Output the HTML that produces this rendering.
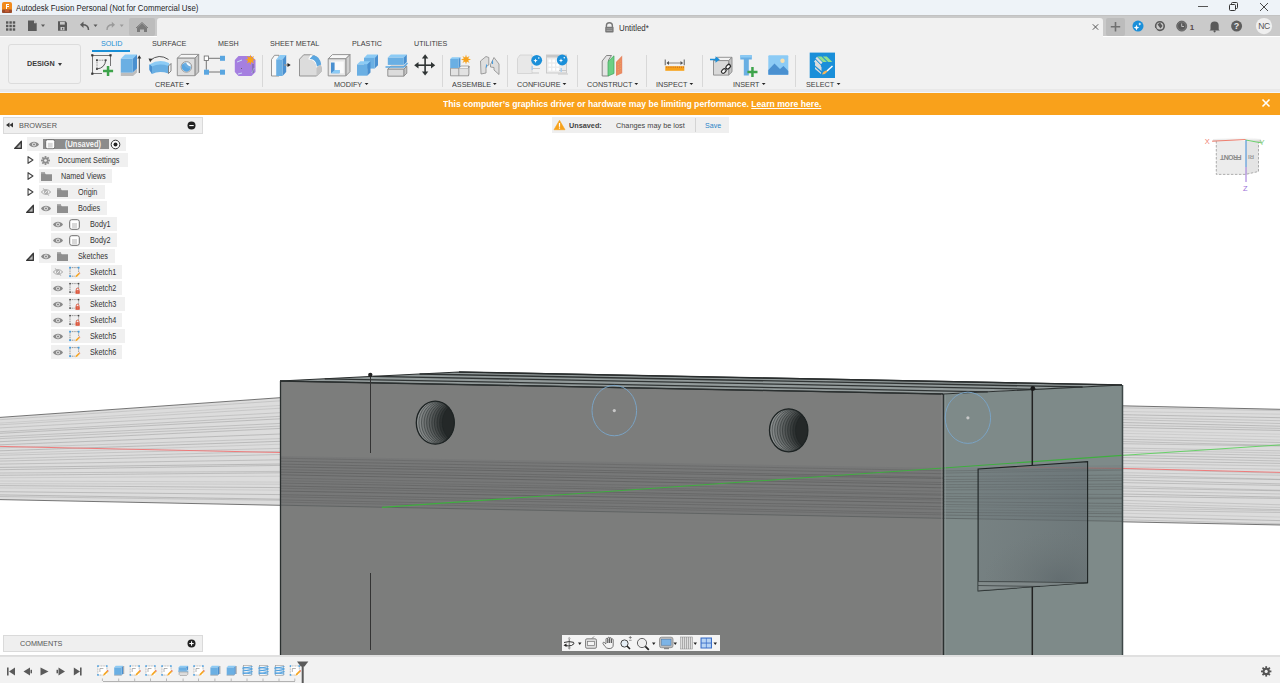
<!DOCTYPE html>
<html><head><meta charset="utf-8">
<style>
*{margin:0;padding:0;box-sizing:border-box}
html,body{width:1280px;height:683px;overflow:hidden;background:#fff;font-family:"Liberation Sans",sans-serif;position:relative}
.a{position:absolute}
.t{position:absolute;white-space:nowrap;line-height:1}
svg{position:absolute;overflow:visible}
#title{left:0;top:0;width:1280px;height:15px;background:#eef3f8}
#tabs{left:0;top:15px;width:1280px;height:21px;background:#cacaca;border-top:1px solid #c2c2c2}
#ribbon{left:0;top:37px;width:1280px;height:56px;background:#f1f1f1;border-bottom:1px solid #f4f7fa}
#rband{left:0;top:89px;width:1280px;height:3px;background:#e8e8e8}
#warn{left:0;top:93px;width:1280px;height:22px;background:#f9a11b}
#bottom{left:0;top:655px;width:1280px;height:28px;background:#f2f2f2;border-top:2px solid #e0e0e0}
.tab{top:40px;font-size:8px;color:#3c3c3c;letter-spacing:-0.2px}
.lbl{color:#3c3c3c}
.lbl:after{content:"";display:inline-block;margin-left:2.3px;border-left:2.3px solid transparent;border-right:2.3px solid transparent;border-top:2.6px solid #222;vertical-align:1.5px}
.sep{top:55px;width:1px;height:32px;background:#d8d8d8}
.row{height:13px;background:#f0f0f0}
.rt{font-size:8.6px;color:#333}
</style></head><body>
<!-- TITLE BAR -->
<div id="title" class="a">
  <svg style="left:2px;top:2px" width="10" height="11" viewBox="0 0 10 11"><rect x="0" y="0" width="10" height="11" rx="2" fill="#f28b1c"/><rect x="0" y="7.5" width="10" height="3.5" rx="1" fill="#9a4a2a"/><rect x="3" y="8.5" width="4" height="1" fill="#e86a3a"/><path d="M4 2h3v1H5v1h2v1H5v2H4z" fill="#fff"/></svg>
  <div class="t" style="left:16px;top:3.61px;font-size:8.4px;color:#1e1e1e;transform:scaleX(0.935);transform-origin:0 0;">Autodesk Fusion Personal (Not for Commercial Use)</div>
  <div class="a" style="left:1198px;top:6px;width:10px;height:1px;background:#555"></div>
  <svg style="left:1229px;top:2px" width="9" height="9" viewBox="0 0 9 9"><rect x="0.5" y="2.5" width="6" height="6" rx="1" fill="none" stroke="#333"/><path d="M2.5 2.5V1.5a1 1 0 0 1 1-1h4a1 1 0 0 1 1 1v4a1 1 0 0 1-1 1h-1" fill="none" stroke="#333"/></svg>
  <svg style="left:1259px;top:2px" width="10" height="10" viewBox="0 0 10 10"><path d="M1 1L9 9M9 1L1 9" stroke="#333" stroke-width="0.9"/></svg>
</div>
<!-- TAB BAR -->
<div id="tabs" class="a"></div>
<div class="a" style="left:129px;top:18px;width:26px;height:18px;background:#bcbcbc;border-radius:2px"></div>
<div class="a" style="left:157px;top:18px;width:946px;height:19px;background:#f1f1f1;border-radius:3px 3px 0 0"></div>
<div class="a" style="left:1106px;top:18px;width:19px;height:18px;background:#bcbcbc;border-radius:2px"></div>
<svg style="left:0;top:15px" width="1280" height="22" viewBox="0 15 1280 22">
 <g fill="#585858"><rect x="6" y="21.3" width="2.4" height="2.4"/><rect x="9.4" y="21.3" width="2.4" height="2.4"/><rect x="12.8" y="21.3" width="2.4" height="2.4"/><rect x="6" y="24.8" width="2.4" height="2.4"/><rect x="9.4" y="24.8" width="2.4" height="2.4"/><rect x="12.8" y="24.8" width="2.4" height="2.4"/><rect x="6" y="28.3" width="2.4" height="2.4"/><rect x="9.4" y="28.3" width="2.4" height="2.4"/><rect x="12.8" y="28.3" width="2.4" height="2.4"/></g>
 <path d="M28 20.6H34L36.7 23.3V31H28Z" fill="#5a5a5a"/><path d="M34 20.6V23.3H36.7" fill="#c8c8c8"/>
 <path d="M41 24.5H45L43 27Z" fill="#5a5a5a"/>
 <path d="M58 21.3H65.5L67 22.8V30.8H58Z" fill="#5a5a5a"/><rect x="60" y="21.8" width="4.8" height="2.8" fill="#c8c8c8"/><rect x="60.5" y="27" width="4" height="3.3" fill="#c8c8c8"/><rect x="62" y="27.8" width="1.2" height="1.8" fill="#5a5a5a"/>
 <path d="M88.5 30Q88.5 24.8 82.5 24.8" fill="none" stroke="#5a5a5a" stroke-width="1.5"/><path d="M80 24.8L83.5 21.6V28Z" fill="#5a5a5a"/>
 <path d="M93.5 24.5H97.5L95.5 27Z" fill="#5a5a5a"/>
 <path d="M107 30Q107 24.8 112.5 24.8" fill="none" stroke="#9a9a9a" stroke-width="1.4"/><path d="M115 24.8L111.8 21.8V27.8Z" fill="#9a9a9a"/>
 <path d="M119.7 24.5H123.7L121.7 27Z" fill="#9a9a9a"/>
 <path d="M137 27.8L142 23.2L147 27.8V32H144V29.5H140V32H137Z" fill="#7a7a7a"/><path d="M136 28L142 22.5L148 28" fill="none" stroke="#7a7a7a" stroke-width="1"/>
 <path d="M606.4 27V25.8a3 3 0 0 1 6 0V27" fill="none" stroke="#777" stroke-width="1.4"/><rect x="605.2" y="26.8" width="8.4" height="5.8" rx="1" fill="#777"/><rect x="606.5" y="28.6" width="5.8" height="0.6" fill="#bbb"/><rect x="606.5" y="30.3" width="5.8" height="0.6" fill="#bbb"/>
 <path d="M1092.8 24.3L1098.2 29.7M1098.2 24.3L1092.8 29.7" stroke="#555" stroke-width="1"/>
 <path d="M1115.5 22V31.5M1110.8 26.8H1120.2" stroke="#707070" stroke-width="1.6"/>
 <circle cx="1138" cy="26.1" r="5.5" fill="#1a8fd9"/><path d="M1136.5 24.8l0.8 2 2 0.8-2 0.8-0.8 2-0.8-2-2-0.8 2-0.8z" fill="#fff"/><path d="M1139.8 22.5l0.5 1.1 1.1 0.5-1.1 0.5-0.5 1.1-0.5-1.1-1.1-0.5 1.1-0.5z" fill="#fff"/>
 <circle cx="1159.9" cy="26.1" r="4.3" fill="none" stroke="#5a5a5a" stroke-width="1.6"/><path d="M1157.5 24.5L1160 22.5L1162.5 26L1160.5 28.5Z" fill="#5a5a5a"/><path d="M1155.3 28L1157.5 31.5" stroke="#c8c8c8" stroke-width="1"/>
 <circle cx="1181.7" cy="26.1" r="5" fill="#777" stroke="#5a5a5a" stroke-width="0.8"/><circle cx="1181.7" cy="26.1" r="3.6" fill="#5a5a5a"/><path d="M1181.7 23.5V26.5H1184" fill="none" stroke="#c8c8c8" stroke-width="0.9"/>
 <text x="1189.8" y="29.5" font-family="Liberation Sans" font-size="8" font-weight="bold" fill="#5a4a4a">1</text>
 <path d="M1210.5 29.5V25.5a4.1 4.1 0 0 1 8.2 0V29.5L1219.8 30.5H1209.4Z" fill="#5a5a5a"/><circle cx="1214.6" cy="31.3" r="1.1" fill="#5a5a5a"/>
 <circle cx="1236.6" cy="26.1" r="5.5" fill="#5e5e5e"/>
 <text x="1236.6" y="29.4" text-anchor="middle" font-family="Liberation Sans" font-size="9" font-weight="bold" fill="#e8e8e8">?</text>
 <circle cx="1264" cy="26.1" r="8.1" fill="#efefef"/>
 <text x="1264" y="29.3" text-anchor="middle" font-family="Liberation Sans" font-size="8.5" fill="#555" letter-spacing="-0.3">NC</text>
</svg>
<div class="t" style="left:618.5px;top:24.2px;font-size:9px;color:#333;transform:scaleX(0.873);transform-origin:0 0;">Untitled*</div>
<!-- RIBBON -->
<div id="ribbon" class="a">
  <div class="a" style="left:8px;top:7px;width:73px;height:40px;border:1px solid #dcdcdc;border-radius:3px"></div>
  <div class="t" style="left:27px;top:23px;font-size:8px;font-weight:bold;color:#3c3c3c;transform:scaleX(0.903);transform-origin:0 0;">DESIGN</div>
  <div class="a" style="left:58px;top:26px;border-left:2.5px solid transparent;border-right:2.5px solid transparent;border-top:3px solid #3c3c3c"></div>
</div>
<div id="rband" class="a"></div>
<div class="t" style="left:100.5px;top:40.18px;font-size:7.8px;color:#1a8fd6;transform:scaleX(0.919);transform-origin:0 0;">SOLID</div>
<div class="a" style="left:92px;top:50px;width:38px;height:2px;background:#1a8fd6"></div>
<div class="t" style="left:152px;top:40.18px;font-size:7.8px;color:#3c3c3c;transform:scaleX(0.934);transform-origin:0 0;">SURFACE</div>
<div class="t" style="left:217.5px;top:40.18px;font-size:7.8px;color:#3c3c3c;transform:scaleX(0.914);transform-origin:0 0;">MESH</div>
<div class="t" style="left:270px;top:40.18px;font-size:7.8px;color:#3c3c3c;transform:scaleX(0.921);transform-origin:0 0;">SHEET METAL</div>
<div class="t" style="left:351.7px;top:40.18px;font-size:7.8px;color:#3c3c3c;transform:scaleX(0.923);transform-origin:0 0;">PLASTIC</div>
<div class="t" style="left:414px;top:40.18px;font-size:7.8px;color:#3c3c3c;transform:scaleX(0.915);transform-origin:0 0;">UTILITIES</div>
<div class="t lbl" style="left:155.1px;top:80.8px;font-size:7.8px;transform:scaleX(0.93);transform-origin:0 0">CREATE</div>
<div class="t lbl" style="left:334px;top:80.8px;font-size:7.8px;transform:scaleX(0.93);transform-origin:0 0">MODIFY</div>
<div class="t lbl" style="left:452px;top:80.8px;font-size:7.8px;transform:scaleX(0.93);transform-origin:0 0">ASSEMBLE</div>
<div class="t lbl" style="left:517px;top:80.8px;font-size:7.8px;transform:scaleX(0.93);transform-origin:0 0">CONFIGURE</div>
<div class="t lbl" style="left:587px;top:80.8px;font-size:7.8px;transform:scaleX(0.93);transform-origin:0 0">CONSTRUCT</div>
<div class="t lbl" style="left:656px;top:80.8px;font-size:7.8px;transform:scaleX(0.93);transform-origin:0 0">INSPECT</div>
<div class="t lbl" style="left:732.5px;top:80.8px;font-size:7.8px;transform:scaleX(0.93);transform-origin:0 0">INSERT</div>
<div class="t lbl" style="left:805.5px;top:80.8px;font-size:7.8px;transform:scaleX(0.93);transform-origin:0 0">SELECT</div>
<div class="a sep" style="left:262px"></div>
<div class="a sep" style="left:442px"></div>
<div class="a sep" style="left:507px"></div>
<div class="a sep" style="left:577px"></div>
<div class="a sep" style="left:646px"></div>
<div class="a sep" style="left:702px"></div>
<div class="a sep" style="left:795px"></div>
<svg style="left:0;top:0" width="1280" height="100" viewBox="0 0 1280 100"><g stroke="#555" stroke-width="0.8" fill="none"><path d="M92.5 55.5H110.5V66M92.5 55.5V73.5H102"/></g>
<rect x="91.2" y="54.199999999999996" width="2.2" height="2.2" fill="#333"/>
<rect x="109.4" y="54.199999999999996" width="2.2" height="2.2" fill="#333"/>
<rect x="91.2" y="72.60000000000001" width="2.2" height="2.2" fill="#333"/>
<path d="M97 60.2H105.5M97 60.2V69" stroke="#666" stroke-width="0.8" stroke-dasharray="1 0.7" fill="none"/>
<path d="M105.7 60.2Q105 68 97 69" stroke="#444" stroke-width="0.9" fill="none"/>
<rect x="96.0" y="59.300000000000004" width="1.8" height="1.8" fill="#444"/>
<rect x="104.8" y="59.300000000000004" width="1.8" height="1.8" fill="#444"/>
<rect x="96.0" y="68.1" width="1.8" height="1.8" fill="#444"/>
<path d="M106.8 66h2.5v3.8h3.8v2.5h-3.8v3.8h-2.5v-3.8h-3.8v-2.5h3.8z" fill="#3da34a"/>
<path d="M120.8 72.5H133L137 68.5V72.5L133 76H120.8Z" fill="#bdbdbd"/>
<path d="M120.8 58.800000000000004L125.0 54.6H137.0L132.8 58.800000000000004Z" fill="#8ccbf5"/>
<path d="M132.8 58.800000000000004L137.0 54.6V68.39999999999999L132.8 72.6Z" fill="#4a90d0"/>
<rect x="120.8" y="58.800000000000004" width="12.0" height="13.8" fill="#6aafe3"/>
<path d="M139.3 73V57" stroke="#444" stroke-width="1"/><path d="M137.3 58.5L139.3 55.3L141.3 58.5Z" fill="#333"/>
<path d="M150 60.5Q159 53 168.5 59.5" stroke="#444" stroke-width="0.9" fill="none"/><path d="M148.5 58.5L152.5 58.8L150.2 62.2Z" fill="#333"/>
<path d="M149.5 64.5Q159 58.5 169 63L170 69Q159 66 152 70.5L149.5 69Z" fill="#8ccbf5"/>
<path d="M149.5 64.5L152 66.5Q159 63 168.5 66V73.5Q159 70.5 152 74L149.5 70Z" fill="#6aafe3"/>
<path d="M149.5 64.5L152 66.5V74L149.5 70Z" fill="#4a90d0"/>
<path d="M168.5 66L171 63.5V71L168.5 73.5Z" fill="#f4f4f4" stroke="#555" stroke-width="0.7"/>
<path d="M177.3 58.199999999999996L181.10000000000002 54.4H198.70000000000002L194.9 58.199999999999996Z" fill="#f6f6f6" stroke="#8a8a8a" stroke-width="0.9" stroke-linejoin="round"/>
<path d="M194.9 58.199999999999996L198.70000000000002 54.4V71.9L194.9 75.7Z" fill="#c6c6c6" stroke="#8a8a8a" stroke-width="0.9" stroke-linejoin="round"/>
<rect x="177.3" y="58.199999999999996" width="17.599999999999998" height="17.5" fill="#dedede" stroke="#8a8a8a" stroke-width="0.9" stroke-linejoin="round"/>
<circle cx="186.4" cy="66.9" r="5.3" fill="#eaeaea" stroke="#8a8a8a" stroke-width="0.8"/>
<path d="M182.2 64.5A4.6 4.6 0 0 0 190.6 68.8Q185.5 68.5 183.5 63.8Z" fill="#5aa6e0"/><circle cx="186.4" cy="66.9" r="4.5" fill="#5aa6e0" opacity="0.85"/><path d="M186 62.5Q190 62.8 190.8 66.5Q187.5 66 186 62.5Z" fill="#fff"/>
<path d="M208.5 58.3H220M206.3 60.5V69.8M208.5 72H220" stroke="#555" stroke-width="0.8"/>
<rect x="204.2" y="56" width="4.4" height="4.4" fill="#fff" stroke="#666" stroke-width="0.8"/>
<rect x="220" y="55.8" width="5" height="5" fill="#5aa6e0"/>
<rect x="204" y="69.7" width="5" height="5" fill="#5aa6e0"/>
<rect x="220" y="69.7" width="5" height="5" fill="#5aa6e0"/>
<path d="M238.5 56H251.5L255.5 60V72L251.5 76H238.5L234.8 72V60Z" fill="#a57fe0"/>
<path d="M237 62L242 60M252 73L254 68M238 74L242 73" stroke="#cfe6f7" stroke-width="0.9"/>
<path d="M253 64V73" stroke="#5a5a7a" stroke-width="0.8"/><circle cx="241.5" cy="68.5" r="0.5" fill="#555"/>
<polygon points="255.60,59.80 252.62,60.72 254.08,63.48 251.32,62.02 250.40,65.00 249.48,62.02 246.72,63.48 248.18,60.72 245.20,59.80 248.18,58.88 246.72,56.12 249.48,57.58 250.40,54.60 251.32,57.58 254.08,56.12 252.62,58.88" fill="#f7a21b"/>
<path d="M271.5 76V59.5L274.5 55.3H279V76Z" fill="#f8f8f8" stroke="#8a8a8a" stroke-width="0.9" stroke-linejoin="round"/>
<path d="M276.2 59.5L280 55H286.2L282.5 59.5Z" fill="#8ccbf5"/><path d="M282.5 59.5L286.2 55V72L282.5 76Z" fill="#4a90d0"/><rect x="276.2" y="59.5" width="6.3" height="16.5" fill="#6aafe3"/>
<path d="M284 65H288" stroke="#999" stroke-width="1.4"/><path d="M287.5 63L290.7 65L287.5 67Z" fill="#222"/>
<path d="M299.5 59.2L303.7 54.8H310Q319.5 55 321 67.5V71.5L316.5 76H299.5Z" fill="#dcdcdc" stroke="#8a8a8a" stroke-width="0.9" stroke-linejoin="round"/>
<path d="M316.5 76V68L321 64V71.5Z" fill="#c4c4c4"/>
<path d="M308.2 59.2Q316.5 60 316.5 68Q316.5 66 321 64.5Q319 55.5 310.5 55Z" fill="#fff"/>
<path d="M309.5 59Q316 58.5 317 66.5L321.2 64.5Q319.5 55.5 313 55.3Z" fill="#5aa6e0"/>
<path d="M328.2 58.800000000000004L332.4 54.6H350.0L345.8 58.800000000000004Z" fill="#f8f8f8" stroke="#8a8a8a" stroke-width="0.9" stroke-linejoin="round"/>
<path d="M345.8 58.800000000000004L350.0 54.6V71.7L345.8 75.9Z" fill="#cfcfcf" stroke="#8a8a8a" stroke-width="0.9" stroke-linejoin="round"/>
<rect x="328.2" y="58.800000000000004" width="17.6" height="17.1" fill="#e6e6e6" stroke="#8a8a8a" stroke-width="0.9" stroke-linejoin="round"/>
<rect x="330.8" y="61.5" width="13" height="11.8" fill="#fafafa"/>
<path d="M331 62.6H334.6V70H339.5V73.3H331Z" fill="#4a90d0"/><path d="M334.6 70H339.5V73.3H331Z" fill="#8ccbf5"/>
<path d="M364 57.9L367.3 54.6H378L374.7 57.9Z" fill="#8ccbf5"/>
<path d="M374.7 57.9L378 54.6V65.3L374.7 68.6Z" fill="#4a90d0"/>
<rect x="364" y="57.9" width="10.7" height="10.7" fill="#6aafe3"/>
<path d="M357 64.5L360.3 61.2H370.5L367.2 64.5Z" fill="#8ccbf5"/>
<path d="M367.2 64.5L370.5 61.2V72.4L367.2 75.7Z" fill="#4a90d0"/>
<rect x="357" y="64.5" width="10.2" height="11.2" fill="#6aafe3"/>
<path d="M387.8 69.2L390.8 66.2H406.8L403.8 69.2Z" fill="#f2f2f2" stroke="#8a8a8a" stroke-width="0.9" stroke-linejoin="round"/>
<path d="M403.8 69.2L406.8 66.2V73.2L403.8 76.2Z" fill="#c2c2c2" stroke="#8a8a8a" stroke-width="0.9" stroke-linejoin="round"/>
<rect x="387.8" y="69.2" width="16" height="7" fill="#dcdcdc" stroke="#8a8a8a" stroke-width="0.9" stroke-linejoin="round"/>
<path d="M387.8 57.6L390.8 54.6H406.8L403.8 57.6Z" fill="#8ccbf5"/>
<path d="M403.8 57.6L406.8 54.6V61.900000000000006L403.8 64.9Z" fill="#4a90d0"/>
<rect x="387.8" y="57.6" width="16" height="7.300000000000001" fill="#6aafe3"/>
<path d="M385.5 67H403.8L407.5 63" stroke="#5aa6e0" stroke-width="1.3" fill="none"/>
<g fill="#2f3434"><rect x="424.3" y="57" width="1.6" height="16"/><rect x="416.5" y="64.4" width="16" height="1.6"/><path d="M425.1 54.2L428.3 58.5H421.9Z"/><path d="M425.1 75.6L428.3 71.5H421.9Z"/><path d="M414.2 65.2L418.5 62V68.4Z"/><path d="M435.2 65.2L431 62V68.4Z"/></g>
<path d="M450.5 68.2H468.5V75.8H450.5Z" fill="#e2e2e2" stroke="#8a8a8a" stroke-width="0.8"/><path d="M458.8 68.2V75.8" stroke="#8a8a8a" stroke-width="0.8"/><path d="M459 68.2L461 66H469L468.5 68.2M468.5 68.2L469 66V73.8L468.5 75.8" fill="#f4f4f4" stroke="#8a8a8a" stroke-width="0.7"/>
<path d="M450.2 59.0L452.0 57.2H460.4L458.59999999999997 59.0Z" fill="#8ccbf5"/>
<path d="M458.59999999999997 59.0L460.4 57.2V66.2L458.59999999999997 68.0Z" fill="#4a90d0"/>
<rect x="450.2" y="59.0" width="8.399999999999999" height="9.0" fill="#6aafe3"/>
<polygon points="471.00,59.50 468.12,60.38 469.54,63.04 466.88,61.62 466.00,64.50 465.12,61.62 462.46,63.04 463.88,60.38 461.00,59.50 463.88,58.62 462.46,55.96 465.12,57.38 466.00,54.50 466.88,57.38 469.54,55.96 468.12,58.62" fill="#f7a21b"/>
<path d="M480.5 61L486 56.5L488.8 57.5V65L486 66.5V73L481 74Z" fill="#dedede" stroke="#8a8a8a" stroke-width="0.8" stroke-linejoin="round"/>
<path d="M490.5 64.5L494 57.5L499 64V74.5L494 70V67.5L490.5 67Z" fill="#dedede" stroke="#8a8a8a" stroke-width="0.8" stroke-linejoin="round"/>
<path d="M492.5 60.5V64M486.5 64.5V67.5" stroke="#4a9ee0" stroke-width="1.1"/>
<path d="M517.5 58.5L520 55H532V73.5H517.5Z" fill="#e8e8e8" stroke="#d0d0d0" stroke-width="0.8"/>
<path d="M532 68.5H540M532 73H539" stroke="#c8c8c8" stroke-width="1.1"/><rect x="531.5" y="66" width="1.4" height="4" fill="#a8cdee"/>
<circle cx="536.7" cy="60.3" r="5.4" fill="#1a8fd9"/><path d="M535.5 58.5l0.6 1.6 1.6 0.6-1.6 0.6-0.6 1.6-0.6-1.6-1.6-0.6 1.6-0.6z" fill="#fff"/><circle cx="538.8" cy="58" r="0.8" fill="#fff"/>
<rect x="546.5" y="55" width="20" height="18" fill="#ececec" stroke="#c8c8c8" stroke-width="0.9"/><rect x="546.5" y="55" width="20" height="2.5" fill="#c8c8c8"/>
<rect x="548.5" y="59.5" width="2.6" height="2.8" fill="#fff"/>
<rect x="552.4" y="59.5" width="2.6" height="2.8" fill="#fff"/>
<rect x="556.3" y="59.5" width="2.6" height="2.8" fill="#fff"/>
<rect x="548.5" y="63.7" width="2.6" height="2.8" fill="#fff"/>
<rect x="552.4" y="63.7" width="2.6" height="2.8" fill="#fff"/>
<rect x="556.3" y="63.7" width="2.6" height="2.8" fill="#fff"/>
<rect x="548.5" y="67.9" width="2.6" height="2.8" fill="#fff"/>
<rect x="552.4" y="67.9" width="2.6" height="2.8" fill="#fff"/>
<rect x="556.3" y="67.9" width="2.6" height="2.8" fill="#fff"/>
<path d="M558 74H568M559 70.5H567" stroke="#c8c8c8" stroke-width="1.1"/><rect x="560.5" y="68" width="1.4" height="4" fill="#a8cdee"/>
<circle cx="562.2" cy="60" r="5.4" fill="#1a8fd9"/><path d="M561 58.3l0.6 1.6 1.6 0.6-1.6 0.6-0.6 1.6-0.6-1.6-1.6-0.6 1.6-0.6z" fill="#fff"/><circle cx="564.3" cy="57.8" r="0.8" fill="#fff"/>
<path d="M602.2 61L606.5 55.5H611.5L608.5 60V76H602.2Z" fill="#e4e4e4" stroke="#7a7a7a" stroke-width="0.9" stroke-linejoin="round"/>
<path d="M608 61.5L614 55.8V73.5L608 76Z" fill="#6bcf84" stroke="#3fa35a" stroke-width="0.7"/>
<path d="M616 62L622.2 55.5V73.3L616 76Z" fill="#e88862"/>
<circle cx="618.2" cy="62.0" r="0.45" fill="#f7c24a"/><circle cx="620.2" cy="61.0" r="0.45" fill="#f7c24a"/>
<circle cx="618.2" cy="64.5" r="0.45" fill="#f7c24a"/><circle cx="620.2" cy="63.5" r="0.45" fill="#f7c24a"/>
<circle cx="618.2" cy="67.0" r="0.45" fill="#f7c24a"/><circle cx="620.2" cy="66.0" r="0.45" fill="#f7c24a"/>
<circle cx="618.2" cy="69.5" r="0.45" fill="#f7c24a"/><circle cx="620.2" cy="68.5" r="0.45" fill="#f7c24a"/>
<circle cx="618.2" cy="72.0" r="0.45" fill="#f7c24a"/><circle cx="620.2" cy="71.0" r="0.45" fill="#f7c24a"/>
<rect x="665.3" y="66.2" width="19" height="4.6" fill="#f7a21b"/>
<path d="M665.3 59.5V65.3M684.3 59.5V65.3" stroke="#888" stroke-width="1.4"/><path d="M667 63H682.5" stroke="#999" stroke-width="1.2"/><path d="M666.5 63L669 61V65ZM683 63L680.5 61V65Z" fill="#555"/>
<rect x="666.5" y="66.5" width="0.6" height="1.4" fill="#b85a2a"/>
<rect x="668.6" y="66.5" width="0.6" height="1.4" fill="#b85a2a"/>
<rect x="670.7" y="66.5" width="0.6" height="1.4" fill="#b85a2a"/>
<rect x="672.8" y="66.5" width="0.6" height="1.4" fill="#b85a2a"/>
<rect x="674.9" y="66.5" width="0.6" height="1.4" fill="#b85a2a"/>
<rect x="677.0" y="66.5" width="0.6" height="1.4" fill="#b85a2a"/>
<rect x="679.1" y="66.5" width="0.6" height="1.4" fill="#b85a2a"/>
<rect x="681.2" y="66.5" width="0.6" height="1.4" fill="#b85a2a"/>
<rect x="683.3" y="66.5" width="0.6" height="1.4" fill="#b85a2a"/>
<path d="M713.5 60.599999999999994L716.8 57.3H732.0L728.7 60.599999999999994Z" fill="#f2f2f2" stroke="#8a8a8a" stroke-width="0.9" stroke-linejoin="round"/>
<path d="M728.7 60.599999999999994L732.0 57.3V71.8L728.7 75.1Z" fill="#c4c4c4" stroke="#8a8a8a" stroke-width="0.9" stroke-linejoin="round"/>
<rect x="713.5" y="60.599999999999994" width="15.2" height="14.5" fill="#d9d9d9" stroke="#8a8a8a" stroke-width="0.9" stroke-linejoin="round"/>
<path d="M710 58.8H715.5V56.2L719.8 59.5L715.5 62.7V60.3H710Z" fill="#1a8fd9"/>
<g fill="none" stroke="#fff" stroke-width="3"><path d="M722 73.5L724.5 71M727 68.5L729.5 66"/></g>
<g fill="none" stroke="#2a2a2a" stroke-width="1.2"><rect x="721.2" y="69.3" width="5.2" height="3.4" rx="1.7" transform="rotate(-45 723.8 71)"/><rect x="725.6" y="65" width="5.2" height="3.4" rx="1.7" transform="rotate(-45 728.2 66.7)"/></g>
<path d="M740.3 55.2H751.8V59.5H748.8V75.5H743.8V59.5H740.3Z" fill="#6aafe3"/><path d="M740.3 55.2H751.8V57.5H740.3Z" fill="#8ccbf5"/>
<path d="M751.2 67h2.5v3.8h3.8v2.5h-3.8v3.8h-2.5v-3.8h-3.8v-2.5h3.8z" fill="#3da34a"/>
<rect x="768.3" y="55.3" width="20" height="19.5" rx="1" fill="#8ccbf5"/><path d="M768.3 70L774.5 63.5L780 69L783.5 66L788.3 71V74.8H768.3Z" fill="#4a90d0"/><circle cx="782.5" cy="60.8" r="2.2" fill="#f8e0b0"/>
<rect x="809.7" y="52.6" width="25.3" height="25.4" fill="#1a8fd9"/>
<path d="M815.5 58.5L817 56.8L822.5 62.5L821 64.2Z M814 61.5L815.5 59.8L821 65.5L819.5 67.2Z" fill="#e0e0e0"/>
<path d="M815 63.5L816.5 61.8L821.5 67V71L815 65.5Z M815 67L821 72.5V74L815 69Z" fill="#dcdcdc"/>
<path d="M817.3 56.5H821.5L827 62H823Z M822.7 56.5H826.8L832.3 62H828.2Z" fill="#8fe08f"/>
<path d="M826.5 70.5L832 65.5L833 66.5L827.5 71.5Z" fill="#fff"/><path d="M822 74.5Q823 71 826.5 70.5L827.5 71.5Q826 74 822 74.5Z" fill="#f5b75a"/></svg>
<!-- WARNING -->
<div id="warn" class="a">
  <div class="t" style="left:442.5px;top:6.8px;font-size:9px;font-weight:bold;color:#fff;transform:scaleX(0.96);transform-origin:0 0;">This computer’s graphics driver or hardware may be limiting performance. <span style="text-decoration:underline">Learn more here.</span></div>
  <svg style="left:1262px;top:6px" width="8" height="8" viewBox="0 0 8 8"><path d="M0.5 0.5L7.5 7.5M7.5 0.5L0.5 7.5" stroke="#fff" stroke-width="1.6"/></svg>
</div>
<!-- VIEWPORT -->
<svg id="scene" style="left:0;top:0" width="1280" height="683" viewBox="0 0 1280 683">
<polygon points="0,417.4 280.5,397.7 280.5,505.3 0,499.6" fill="#dcdcdc"/>
<line x1="0" y1="419.7" x2="280.5" y2="400.8" stroke="#808080" stroke-width="0.6" stroke-opacity="0.42"/>
<line x1="0" y1="423.1" x2="280.5" y2="405.4" stroke="#808080" stroke-width="0.6" stroke-opacity="0.30"/>
<line x1="0" y1="424.8" x2="280.5" y2="408.2" stroke="#808080" stroke-width="0.6" stroke-opacity="0.37"/>
<line x1="0" y1="427.9" x2="280.5" y2="412.7" stroke="#808080" stroke-width="0.6" stroke-opacity="0.46"/>
<line x1="0" y1="431.7" x2="280.5" y2="416.3" stroke="#808080" stroke-width="0.6" stroke-opacity="0.52"/>
<line x1="0" y1="433.3" x2="280.5" y2="418.8" stroke="#808080" stroke-width="0.6" stroke-opacity="0.61"/>
<line x1="0" y1="436.6" x2="280.5" y2="423.4" stroke="#808080" stroke-width="0.6" stroke-opacity="0.53"/>
<line x1="0" y1="438.6" x2="280.5" y2="426.1" stroke="#808080" stroke-width="0.6" stroke-opacity="0.50"/>
<line x1="0" y1="441.7" x2="280.5" y2="428.4" stroke="#808080" stroke-width="0.6" stroke-opacity="0.61"/>
<line x1="0" y1="444.8" x2="280.5" y2="434.0" stroke="#808080" stroke-width="0.6" stroke-opacity="0.61"/>
<line x1="0" y1="447.9" x2="280.5" y2="438.6" stroke="#808080" stroke-width="0.6" stroke-opacity="0.43"/>
<line x1="0" y1="450.8" x2="280.5" y2="441.3" stroke="#808080" stroke-width="0.6" stroke-opacity="0.64"/>
<line x1="0" y1="453.6" x2="280.5" y2="444.2" stroke="#808080" stroke-width="0.6" stroke-opacity="0.33"/>
<line x1="0" y1="455.3" x2="280.5" y2="448.4" stroke="#808080" stroke-width="0.6" stroke-opacity="0.44"/>
<line x1="0" y1="458.7" x2="280.5" y2="451.3" stroke="#808080" stroke-width="0.6" stroke-opacity="0.47"/>
<line x1="0" y1="461.1" x2="280.5" y2="454.5" stroke="#808080" stroke-width="0.6" stroke-opacity="0.50"/>
<line x1="0" y1="464.1" x2="280.5" y2="459.8" stroke="#808080" stroke-width="0.6" stroke-opacity="0.54"/>
<line x1="0" y1="467.4" x2="280.5" y2="464.0" stroke="#808080" stroke-width="0.6" stroke-opacity="0.66"/>
<line x1="0" y1="469.7" x2="280.5" y2="465.4" stroke="#808080" stroke-width="0.6" stroke-opacity="0.61"/>
<line x1="0" y1="473.0" x2="280.5" y2="471.4" stroke="#808080" stroke-width="0.6" stroke-opacity="0.49"/>
<line x1="0" y1="475.3" x2="280.5" y2="472.8" stroke="#808080" stroke-width="0.6" stroke-opacity="0.60"/>
<line x1="0" y1="477.8" x2="280.5" y2="476.2" stroke="#808080" stroke-width="0.6" stroke-opacity="0.30"/>
<line x1="0" y1="481.0" x2="280.5" y2="482.1" stroke="#808080" stroke-width="0.6" stroke-opacity="0.31"/>
<line x1="0" y1="483.7" x2="280.5" y2="484.2" stroke="#808080" stroke-width="0.6" stroke-opacity="0.33"/>
<line x1="0" y1="485.6" x2="280.5" y2="487.6" stroke="#808080" stroke-width="0.6" stroke-opacity="0.61"/>
<line x1="0" y1="487.9" x2="280.5" y2="490.2" stroke="#808080" stroke-width="0.6" stroke-opacity="0.29"/>
<line x1="0" y1="491.7" x2="280.5" y2="494.6" stroke="#808080" stroke-width="0.6" stroke-opacity="0.61"/>
<line x1="0" y1="494.9" x2="280.5" y2="499.2" stroke="#808080" stroke-width="0.6" stroke-opacity="0.66"/>
<line x1="0" y1="496.5" x2="280.5" y2="500.3" stroke="#808080" stroke-width="0.6" stroke-opacity="0.51"/>
<line x1="0" y1="417.4" x2="280" y2="397.7" stroke="#555" stroke-width="1" stroke-opacity="0.8"/>
<line x1="0" y1="499.6" x2="280" y2="505.3" stroke="#555" stroke-width="1" stroke-opacity="0.8"/>
<line x1="0" y1="446.4" x2="280" y2="452.5" stroke="#f07070" stroke-width="0.9"/>
<polygon points="1122,405.8 1280,409.3 1280,525 1122,521.8" fill="#dcdcdc"/>
<line x1="1122" y1="407.8" x2="1280" y2="410.6" stroke="#808080" stroke-width="0.6" stroke-opacity="0.43"/>
<line x1="1122" y1="411.5" x2="1280" y2="414.2" stroke="#808080" stroke-width="0.6" stroke-opacity="0.29"/>
<line x1="1122" y1="414.7" x2="1280" y2="417.7" stroke="#808080" stroke-width="0.6" stroke-opacity="0.64"/>
<line x1="1122" y1="417.5" x2="1280" y2="420.7" stroke="#808080" stroke-width="0.6" stroke-opacity="0.45"/>
<line x1="1122" y1="419.6" x2="1280" y2="423.5" stroke="#808080" stroke-width="0.6" stroke-opacity="0.50"/>
<line x1="1122" y1="422.5" x2="1280" y2="426.2" stroke="#808080" stroke-width="0.6" stroke-opacity="0.64"/>
<line x1="1122" y1="425.1" x2="1280" y2="428.4" stroke="#808080" stroke-width="0.6" stroke-opacity="0.55"/>
<line x1="1122" y1="427.5" x2="1280" y2="430.4" stroke="#808080" stroke-width="0.6" stroke-opacity="0.65"/>
<line x1="1122" y1="430.7" x2="1280" y2="434.2" stroke="#808080" stroke-width="0.6" stroke-opacity="0.28"/>
<line x1="1122" y1="433.3" x2="1280" y2="436.9" stroke="#808080" stroke-width="0.6" stroke-opacity="0.28"/>
<line x1="1122" y1="436.4" x2="1280" y2="440.1" stroke="#808080" stroke-width="0.6" stroke-opacity="0.30"/>
<line x1="1122" y1="439.2" x2="1280" y2="442.5" stroke="#808080" stroke-width="0.6" stroke-opacity="0.54"/>
<line x1="1122" y1="441.5" x2="1280" y2="445.4" stroke="#808080" stroke-width="0.6" stroke-opacity="0.56"/>
<line x1="1122" y1="443.7" x2="1280" y2="446.0" stroke="#808080" stroke-width="0.6" stroke-opacity="0.54"/>
<line x1="1122" y1="448.0" x2="1280" y2="450.8" stroke="#808080" stroke-width="0.6" stroke-opacity="0.45"/>
<line x1="1122" y1="450.1" x2="1280" y2="453.1" stroke="#808080" stroke-width="0.6" stroke-opacity="0.42"/>
<line x1="1122" y1="452.4" x2="1280" y2="455.5" stroke="#808080" stroke-width="0.6" stroke-opacity="0.50"/>
<line x1="1122" y1="455.2" x2="1280" y2="458.3" stroke="#808080" stroke-width="0.6" stroke-opacity="0.57"/>
<line x1="1122" y1="457.5" x2="1280" y2="461.0" stroke="#808080" stroke-width="0.6" stroke-opacity="0.56"/>
<line x1="1122" y1="460.7" x2="1280" y2="463.4" stroke="#808080" stroke-width="0.6" stroke-opacity="0.58"/>
<line x1="1122" y1="463.4" x2="1280" y2="466.0" stroke="#808080" stroke-width="0.6" stroke-opacity="0.44"/>
<line x1="1122" y1="466.9" x2="1280" y2="469.3" stroke="#808080" stroke-width="0.6" stroke-opacity="0.40"/>
<line x1="1122" y1="469.0" x2="1280" y2="473.2" stroke="#808080" stroke-width="0.6" stroke-opacity="0.44"/>
<line x1="1122" y1="472.7" x2="1280" y2="475.2" stroke="#808080" stroke-width="0.6" stroke-opacity="0.40"/>
<line x1="1122" y1="475.1" x2="1280" y2="479.3" stroke="#808080" stroke-width="0.6" stroke-opacity="0.45"/>
<line x1="1122" y1="477.2" x2="1280" y2="479.6" stroke="#808080" stroke-width="0.6" stroke-opacity="0.48"/>
<line x1="1122" y1="479.9" x2="1280" y2="483.9" stroke="#808080" stroke-width="0.6" stroke-opacity="0.60"/>
<line x1="1122" y1="482.6" x2="1280" y2="485.4" stroke="#808080" stroke-width="0.6" stroke-opacity="0.59"/>
<line x1="1122" y1="486.1" x2="1280" y2="490.2" stroke="#808080" stroke-width="0.6" stroke-opacity="0.41"/>
<line x1="1122" y1="488.0" x2="1280" y2="490.8" stroke="#808080" stroke-width="0.6" stroke-opacity="0.58"/>
<line x1="1122" y1="491.0" x2="1280" y2="494.0" stroke="#808080" stroke-width="0.6" stroke-opacity="0.44"/>
<line x1="1122" y1="494.0" x2="1280" y2="497.1" stroke="#808080" stroke-width="0.6" stroke-opacity="0.63"/>
<line x1="1122" y1="496.4" x2="1280" y2="498.4" stroke="#808080" stroke-width="0.6" stroke-opacity="0.64"/>
<line x1="1122" y1="500.3" x2="1280" y2="504.8" stroke="#808080" stroke-width="0.6" stroke-opacity="0.44"/>
<line x1="1122" y1="503.2" x2="1280" y2="507.5" stroke="#808080" stroke-width="0.6" stroke-opacity="0.36"/>
<line x1="1122" y1="505.6" x2="1280" y2="509.7" stroke="#808080" stroke-width="0.6" stroke-opacity="0.53"/>
<line x1="1122" y1="508.0" x2="1280" y2="510.8" stroke="#808080" stroke-width="0.6" stroke-opacity="0.41"/>
<line x1="1122" y1="510.3" x2="1280" y2="512.5" stroke="#808080" stroke-width="0.6" stroke-opacity="0.50"/>
<line x1="1122" y1="513.2" x2="1280" y2="517.1" stroke="#808080" stroke-width="0.6" stroke-opacity="0.29"/>
<line x1="1122" y1="516.9" x2="1280" y2="520.6" stroke="#808080" stroke-width="0.6" stroke-opacity="0.63"/>
<line x1="1122" y1="519.7" x2="1280" y2="523.9" stroke="#808080" stroke-width="0.6" stroke-opacity="0.50"/>
<line x1="1122" y1="405.8" x2="1280" y2="409.3" stroke="#555" stroke-width="1" stroke-opacity="0.8"/>
<line x1="1122" y1="521.8" x2="1280" y2="525" stroke="#555" stroke-width="1" stroke-opacity="0.8"/>
<line x1="1122" y1="468.4" x2="1280" y2="472.4" stroke="#f07070" stroke-width="0.9"/>
<line x1="1122" y1="455.4" x2="1280" y2="444.9" stroke="#5cd05c" stroke-width="0.9"/>
<polygon points="280,381 943,394 943,655 280,655" fill="#7c7d7c"/>
<polygon points="943,394 1122,385 1122,655 943,655" fill="#7e8a89"/>
<polygon points="281,456 943,468 943,518.3 281,505.2" fill="#777878"/>
<line x1="281" y1="458.2" x2="943" y2="470.7" stroke="#4a4a4a" stroke-width="0.7" stroke-opacity="0.35"/>
<line x1="281" y1="461.2" x2="943" y2="473.7" stroke="#4a4a4a" stroke-width="0.7" stroke-opacity="0.46"/>
<line x1="281" y1="464.1" x2="943" y2="477.2" stroke="#4a4a4a" stroke-width="0.7" stroke-opacity="0.48"/>
<line x1="281" y1="466.8" x2="943" y2="478.5" stroke="#4a4a4a" stroke-width="0.7" stroke-opacity="0.56"/>
<line x1="281" y1="469.6" x2="943" y2="482.5" stroke="#4a4a4a" stroke-width="0.7" stroke-opacity="0.41"/>
<line x1="281" y1="472.1" x2="943" y2="484.5" stroke="#4a4a4a" stroke-width="0.7" stroke-opacity="0.55"/>
<line x1="281" y1="474.8" x2="943" y2="487.8" stroke="#4a4a4a" stroke-width="0.7" stroke-opacity="0.58"/>
<line x1="281" y1="478.2" x2="943" y2="491.3" stroke="#4a4a4a" stroke-width="0.7" stroke-opacity="0.30"/>
<line x1="281" y1="480.7" x2="943" y2="494.0" stroke="#4a4a4a" stroke-width="0.7" stroke-opacity="0.31"/>
<line x1="281" y1="483.1" x2="943" y2="495.2" stroke="#4a4a4a" stroke-width="0.7" stroke-opacity="0.46"/>
<line x1="281" y1="486.0" x2="943" y2="498.6" stroke="#4a4a4a" stroke-width="0.7" stroke-opacity="0.53"/>
<line x1="281" y1="488.3" x2="943" y2="500.1" stroke="#4a4a4a" stroke-width="0.7" stroke-opacity="0.34"/>
<line x1="281" y1="491.1" x2="943" y2="503.0" stroke="#4a4a4a" stroke-width="0.7" stroke-opacity="0.59"/>
<line x1="281" y1="494.7" x2="943" y2="506.7" stroke="#4a4a4a" stroke-width="0.7" stroke-opacity="0.45"/>
<line x1="281" y1="496.8" x2="943" y2="509.3" stroke="#4a4a4a" stroke-width="0.7" stroke-opacity="0.41"/>
<line x1="281" y1="499.9" x2="943" y2="513.0" stroke="#4a4a4a" stroke-width="0.7" stroke-opacity="0.41"/>
<line x1="281" y1="502.1" x2="943" y2="514.8" stroke="#4a4a4a" stroke-width="0.7" stroke-opacity="0.34"/>
<line x1="281" y1="505.2" x2="943" y2="518.3" stroke="#505555" stroke-width="1" stroke-opacity="0.6"/>
<polygon points="943,468 1122,465 1122,521.3 943,518.3" fill="#798585"/>
<line x1="943" y1="470.9" x2="1122" y2="468.6" stroke="#4a4a4a" stroke-width="0.7" stroke-opacity="0.40"/>
<line x1="943" y1="473.1" x2="1122" y2="470.1" stroke="#4a4a4a" stroke-width="0.7" stroke-opacity="0.39"/>
<line x1="943" y1="476.5" x2="1122" y2="475.1" stroke="#4a4a4a" stroke-width="0.7" stroke-opacity="0.40"/>
<line x1="943" y1="479.5" x2="1122" y2="478.1" stroke="#4a4a4a" stroke-width="0.7" stroke-opacity="0.41"/>
<line x1="943" y1="481.8" x2="1122" y2="480.5" stroke="#4a4a4a" stroke-width="0.7" stroke-opacity="0.48"/>
<line x1="943" y1="484.7" x2="1122" y2="484.1" stroke="#4a4a4a" stroke-width="0.7" stroke-opacity="0.42"/>
<line x1="943" y1="487.3" x2="1122" y2="486.6" stroke="#4a4a4a" stroke-width="0.7" stroke-opacity="0.47"/>
<line x1="943" y1="489.9" x2="1122" y2="489.3" stroke="#4a4a4a" stroke-width="0.7" stroke-opacity="0.41"/>
<line x1="943" y1="493.6" x2="1122" y2="494.5" stroke="#4a4a4a" stroke-width="0.7" stroke-opacity="0.39"/>
<line x1="943" y1="496.4" x2="1122" y2="497.4" stroke="#4a4a4a" stroke-width="0.7" stroke-opacity="0.37"/>
<line x1="943" y1="498.7" x2="1122" y2="498.6" stroke="#4a4a4a" stroke-width="0.7" stroke-opacity="0.50"/>
<line x1="943" y1="501.7" x2="1122" y2="503.5" stroke="#4a4a4a" stroke-width="0.7" stroke-opacity="0.50"/>
<line x1="943" y1="504.5" x2="1122" y2="506.3" stroke="#4a4a4a" stroke-width="0.7" stroke-opacity="0.44"/>
<line x1="943" y1="506.7" x2="1122" y2="508.5" stroke="#4a4a4a" stroke-width="0.7" stroke-opacity="0.30"/>
<line x1="943" y1="509.5" x2="1122" y2="512.0" stroke="#4a4a4a" stroke-width="0.7" stroke-opacity="0.31"/>
<line x1="943" y1="512.3" x2="1122" y2="513.7" stroke="#4a4a4a" stroke-width="0.7" stroke-opacity="0.52"/>
<line x1="943" y1="515.1" x2="1122" y2="516.8" stroke="#4a4a4a" stroke-width="0.7" stroke-opacity="0.51"/>
<line x1="943" y1="518.3" x2="1122" y2="521.3" stroke="#505555" stroke-width="1" stroke-opacity="0.6"/>
<polygon points="280,381 459,372 1122,385 943,394" fill="#939b9b"/>
<line x1="280.0" y1="381.0" x2="943.0" y2="394.0" stroke="#2a2e2e" stroke-width="1.3" stroke-opacity="1"/>
<line x1="324.8" y1="378.8" x2="987.8" y2="391.8" stroke="#2a2e2e" stroke-width="1.3" stroke-opacity="0.95"/>
<line x1="373.1" y1="376.3" x2="1036.1" y2="389.3" stroke="#2a2e2e" stroke-width="1.3" stroke-opacity="0.95"/>
<line x1="419.6" y1="374.0" x2="1082.6" y2="387.0" stroke="#2a2e2e" stroke-width="1.3" stroke-opacity="0.95"/>
<line x1="459.0" y1="372.0" x2="1122.0" y2="385.0" stroke="#2a2e2e" stroke-width="1.4" stroke-opacity="1"/>
<polyline points="280,381 459,372 1122,385" fill="none" stroke="#2a2e2e" stroke-width="1.2"/>
<line x1="382" y1="507.4" x2="1122" y2="455.4" stroke="#3fae3f" stroke-width="1.1"/>
<line x1="1000" y1="467" x2="1122" y2="468.4" stroke="#c66" stroke-width="0.8" stroke-opacity="0.6"/>
<line x1="280.5" y1="381" x2="280.5" y2="655" stroke="#2b3030" stroke-width="1.3"/>
<line x1="941.6" y1="394" x2="941.6" y2="655" stroke="#8a8a8a" stroke-width="0.8" stroke-opacity="0.8"/>
<line x1="945.3" y1="394" x2="945.3" y2="655" stroke="#8e9a9a" stroke-width="0.8" stroke-opacity="0.8"/>
<line x1="943.5" y1="394" x2="943.5" y2="655" stroke="#2b3030" stroke-width="1.3"/>
<line x1="1122.5" y1="385" x2="1122.5" y2="655" stroke="#3e4848" stroke-width="1.5"/>
<line x1="280" y1="381" x2="943" y2="394" stroke="#2b3030" stroke-width="1.2"/>
<line x1="943" y1="394" x2="1122" y2="385" stroke="#2b3030" stroke-width="1.2"/>
<line x1="370.5" y1="375" x2="370.5" y2="453" stroke="#333" stroke-width="1"/>
<line x1="370.5" y1="573" x2="370.5" y2="650" stroke="#333" stroke-width="1"/>
<circle cx="370.3" cy="375" r="2.2" fill="#222"/>
<line x1="1032.3" y1="389" x2="1032.3" y2="465" stroke="#222" stroke-width="1.5"/>
<line x1="1032.3" y1="586" x2="1032.3" y2="655" stroke="#222" stroke-width="1.5"/>
<circle cx="1032.8" cy="388.5" r="2.4" fill="#1a1a1a"/>
<defs><radialGradient id="rg" cx="0.75" cy="0.85" r="0.7"><stop offset="0" stop-color="#5a6468" stop-opacity="0.55"/><stop offset="1" stop-color="#6c7474" stop-opacity="0"/></radialGradient><linearGradient id="lg2" x1="0" x2="1" y1="0" y2="0.3"><stop offset="0" stop-color="#6c7478" stop-opacity="0.35"/><stop offset="1" stop-color="#5e676c" stop-opacity="0.5"/></linearGradient></defs>
<clipPath id="h1c"><ellipse cx="435.3" cy="422.7" rx="19" ry="21.5"/></clipPath>
<g clip-path="url(#h1c)">
<ellipse cx="435.3" cy="422.7" rx="19.00" ry="21.50" fill="#8c9090" stroke="#1e2424" stroke-width="0.6" stroke-opacity="0.75"/>
<ellipse cx="437.6" cy="422.7" rx="18.71" ry="21.29" fill="#818585" stroke="#1e2424" stroke-width="0.6" stroke-opacity="0.75"/>
<ellipse cx="439.9" cy="422.7" rx="18.43" ry="21.07" fill="#777b7b" stroke="#1e2424" stroke-width="0.6" stroke-opacity="0.75"/>
<ellipse cx="442.2" cy="422.7" rx="18.14" ry="20.86" fill="#6c7070" stroke="#1e2424" stroke-width="0.6" stroke-opacity="0.75"/>
<ellipse cx="444.5" cy="422.7" rx="17.86" ry="20.64" fill="#626666" stroke="#1e2424" stroke-width="0.6" stroke-opacity="0.75"/>
<ellipse cx="446.8" cy="422.7" rx="17.57" ry="20.43" fill="#585c5c" stroke="#1e2424" stroke-width="0.6" stroke-opacity="0.75"/>
<ellipse cx="449.1" cy="422.7" rx="17.29" ry="20.21" fill="#4d5151" stroke="#1e2424" stroke-width="0.6" stroke-opacity="0.75"/>
<ellipse cx="451.4" cy="422.7" rx="17.00" ry="19.99" fill="#434747" stroke="#1e2424" stroke-width="0.6" stroke-opacity="0.75"/>
<ellipse cx="453.7" cy="422.7" rx="16.72" ry="19.78" fill="#383c3c" stroke="#1e2424" stroke-width="0.6" stroke-opacity="0.75"/>
<ellipse cx="456.0" cy="422.7" rx="16.43" ry="19.57" fill="#2e3232" stroke="#1e2424" stroke-width="0.6" stroke-opacity="0.75"/>
<ellipse cx="458.3" cy="422.7" rx="16.15" ry="19.35" fill="#242828" stroke="#1e2424" stroke-width="0.6" stroke-opacity="0.75"/>
</g>
<ellipse cx="435.3" cy="422.7" rx="19" ry="21.5" fill="none" stroke="#1e2424" stroke-width="1.3"/>
<clipPath id="h2c"><ellipse cx="788.7" cy="430.3" rx="19.2" ry="21.5"/></clipPath>
<g clip-path="url(#h2c)">
<ellipse cx="788.7" cy="430.3" rx="19.20" ry="21.50" fill="#8c9090" stroke="#1e2424" stroke-width="0.6" stroke-opacity="0.75"/>
<ellipse cx="791.0" cy="430.3" rx="18.91" ry="21.29" fill="#818585" stroke="#1e2424" stroke-width="0.6" stroke-opacity="0.75"/>
<ellipse cx="793.3" cy="430.3" rx="18.62" ry="21.07" fill="#777b7b" stroke="#1e2424" stroke-width="0.6" stroke-opacity="0.75"/>
<ellipse cx="795.6" cy="430.3" rx="18.34" ry="20.86" fill="#6c7070" stroke="#1e2424" stroke-width="0.6" stroke-opacity="0.75"/>
<ellipse cx="797.9" cy="430.3" rx="18.05" ry="20.64" fill="#626666" stroke="#1e2424" stroke-width="0.6" stroke-opacity="0.75"/>
<ellipse cx="800.2" cy="430.3" rx="17.76" ry="20.43" fill="#585c5c" stroke="#1e2424" stroke-width="0.6" stroke-opacity="0.75"/>
<ellipse cx="802.5" cy="430.3" rx="17.47" ry="20.21" fill="#4d5151" stroke="#1e2424" stroke-width="0.6" stroke-opacity="0.75"/>
<ellipse cx="804.8" cy="430.3" rx="17.18" ry="19.99" fill="#434747" stroke="#1e2424" stroke-width="0.6" stroke-opacity="0.75"/>
<ellipse cx="807.1" cy="430.3" rx="16.90" ry="19.78" fill="#383c3c" stroke="#1e2424" stroke-width="0.6" stroke-opacity="0.75"/>
<ellipse cx="809.4" cy="430.3" rx="16.61" ry="19.57" fill="#2e3232" stroke="#1e2424" stroke-width="0.6" stroke-opacity="0.75"/>
<ellipse cx="811.7" cy="430.3" rx="16.32" ry="19.35" fill="#242828" stroke="#1e2424" stroke-width="0.6" stroke-opacity="0.75"/>
</g>
<ellipse cx="788.7" cy="430.3" rx="19.2" ry="21.5" fill="none" stroke="#1e2424" stroke-width="1.3"/>
<ellipse cx="614.3" cy="410.6" rx="22.3" ry="25.2" fill="none" stroke="#7aa3c4" stroke-width="1"/>
<circle cx="614.3" cy="410.6" r="1.6" fill="#c8c8c8"/>
<ellipse cx="967.9" cy="417.8" rx="22.7" ry="25.6" fill="none" stroke="#7aa3c4" stroke-width="1"/>
<circle cx="967.9" cy="417.8" r="1.6" fill="#c8c8c8"/>
<polygon points="978.1,469 1087.6,461.7 1087.6,582.8 978.1,590.8" fill="url(#lg2)"/>
<polygon points="978.1,520 1087.6,522 1087.6,582.8 978.1,590.8" fill="url(#rg)"/>
<polygon points="978.1,469 1087.6,461.7 1087.6,582.8 978.1,590.8" fill="none" stroke="#1e2424" stroke-width="1.1"/>
<line x1="978.1" y1="581.6" x2="1087.6" y2="582.8" stroke="#1e2424" stroke-width="0.9"/>
<polygon points="978.1,581.6 1087.6,582.8 978.1,590.8" fill="#8a9292" fill-opacity="0.6"/>
<line x1="978.1" y1="585.5" x2="1040" y2="586.5" stroke="#1e2424" stroke-width="0.7" stroke-opacity="0.8"/>
</svg>
<!-- UNSAVED -->
<div class="a" style="left:552px;top:117px;width:177px;height:16px;background:#efefef"></div>
<div class="a" style="left:695px;top:118px;width:1px;height:14px;background:#d4d4d4"></div>
<svg style="left:554px;top:120px" width="12" height="10" viewBox="0 0 12 10"><path d="M5.5 0.3L11 9.7H0Z" fill="#f7a21b" stroke="#f7a21b" stroke-width="0.6" stroke-linejoin="round"/><rect x="4.9" y="3" width="1.2" height="3.8" fill="#fff"/><rect x="4.9" y="7.5" width="1.2" height="1.2" fill="#fff"/></svg>
<div class="t" style="left:569.2px;top:121.81px;font-size:7.6px;font-weight:bold;color:#444;transform:scaleX(0.959);transform-origin:0 0;">Unsaved:</div>
<div class="t" style="left:615.8px;top:121.81px;font-size:7.6px;color:#444;transform:scaleX(0.963);transform-origin:0 0;">Changes may be lost</div>
<div class="t" style="left:704.7px;top:121.81px;font-size:7.6px;color:#2a84c8;transform:scaleX(0.93);transform-origin:0 0;">Save</div>
<!-- VIEWCUBE -->
<svg style="left:1200px;top:130px" width="75" height="65" viewBox="1200 130 75 65">
 <defs><linearGradient id="vcs" x1="0" x2="0" y1="0" y2="1"><stop offset="0" stop-color="#fff" stop-opacity="0"/><stop offset="1" stop-color="#b8b8b8"/></linearGradient></defs>
 <path d="M1213 139L1245.5 136.5L1261 139L1261 142.5L1245.5 140L1213 141.5Z" fill="url(#vcs)"/>
 <rect x="1216.3" y="141" width="29.3" height="33.4" fill="#ececec"/>
 <path d="M1245.6 141L1258.5 142V171.5L1245.6 174.4Z" fill="#e4e4e4"/>
 <path d="M1216.3 141V174.4H1245.6L1258.5 171.5V142" fill="none" stroke="#9a9a9a" stroke-width="0.8" stroke-dasharray="2.5 1.5"/>
 <text x="0" y="0" transform="translate(1241.5,154.8) scale(-1,-1)" font-family="Liberation Sans" font-size="7" fill="#8a8a8a" font-weight="bold" textLength="21.5">FRONT</text>
 <text x="0" y="0" transform="translate(1254,154.5) scale(-1,-1)" font-family="Liberation Sans" font-size="6" fill="#9a9a9a" font-weight="bold">RI</text>
 <path d="M1212 141.2L1245.6 139.5" stroke="#f08070" stroke-width="1"/>
 <path d="M1245.6 140L1262 143" stroke="#6cd06c" stroke-width="1"/>
 <path d="M1246 140V167" stroke="#3a8ad8" stroke-width="1"/>
 <path d="M1246 167V182" stroke="#9a70d8" stroke-width="1"/>
 <text x="1204.8" y="144" font-family="Liberation Sans" font-size="7.5" fill="#f08070">X</text>
 <text x="1259.5" y="145" font-family="Liberation Sans" font-size="7.5" fill="#7cc87c">Y</text>
 <text x="1243" y="191" font-family="Liberation Sans" font-size="7.5" fill="#9a70d8">Z</text>
</svg>
<!-- NAVBAR -->
<div class="a" style="left:561.5px;top:634.8px;width:158.3px;height:16px;background:#f4f4f4"></div>
<svg style="left:560px;top:634px" width="162" height="18" viewBox="560 634 162 18">
 <path d="M569.3 637.5V649" stroke="#999" stroke-width="1.4"/><path d="M567.6 639L569.3 636.8L571 639Z" fill="#bbb"/><path d="M567.6 647.5L569.3 649.8L571 647.5Z" fill="#999"/>
 <path d="M564 642.5Q569 640.8 573.5 642.3Q575.5 643.5 571.5 645.5Q568 646.3 565.5 645.5" fill="none" stroke="#333" stroke-width="1"/><path d="M563.5 645.2L566.5 643.5V647Z" fill="#222"/>
 <path d="M578 642.5H581.5L579.75 645Z" fill="#222"/>
 <rect x="585.5" y="638.8" width="11" height="9.5" rx="1.5" fill="#ddd" stroke="#777" stroke-width="0.9"/><rect x="587.5" y="641.5" width="7" height="4" fill="#f4f4f4" stroke="#777" stroke-width="0.7"/><path d="M592 638.5L594 636.5" stroke="#777" stroke-width="0.9"/>
 <path d="M606 643.5V639.2a0.9 0.9 0 0 1 1.8 0V643V638.2a0.9 0.9 0 0 1 1.8 0V643V638.6a0.9 0.9 0 0 1 1.8 0V643V639.8a0.9 0.9 0 0 1 1.8 0V645Q613.2 648.6 609 648.6Q606.5 648.6 605 646.5L603 643.6a0.9 0.9 0 0 1 1.4 -1.1L606 644" fill="#f4f4f4" stroke="#555" stroke-width="0.8" stroke-linejoin="round"/>
 <path d="M604.2 636.8L608 641M606 635.8L611 640" stroke="#f4f4f4" stroke-width="0" />
 <circle cx="624.5" cy="643.5" r="3.6" fill="#e6eef5" stroke="#444" stroke-width="1"/><path d="M627 646L630 649" stroke="#222" stroke-width="1.6"/><path d="M628.8 637.5h3M630.3 636v3M629 640.3h2.6" stroke="#555" stroke-width="0.6"/>
 <circle cx="642" cy="643" r="4.6" fill="#eeeeee" stroke="#555" stroke-width="0.9"/><path d="M645.3 646.3L648.8 649.8" stroke="#222" stroke-width="1.8"/><path d="M652 642.5H655.5L653.75 645Z" fill="#222"/>
 <rect x="659.5" y="637.2" width="13.5" height="10.5" rx="2" fill="#bbb" stroke="#888" stroke-width="0.8"/><rect x="661.5" y="639.2" width="9.5" height="6" fill="#7db4e6" stroke="#4d7aa8" stroke-width="0.5"/><path d="M664 648.5h5" stroke="#888" stroke-width="1.4"/><path d="M673.5 642.5H677L675.25 645Z" fill="#222"/>
 <rect x="680.5" y="637" width="12" height="12" fill="#ddd" stroke="#999" stroke-width="0.6"/><path d="M682.5 637v12M684.5 637v12M686.5 637v12M688.5 637v12M690.5 637v12" stroke="#888" stroke-width="0.6"/><path d="M693.5 642.5H697L695.25 645Z" fill="#222"/>
 <rect x="700.5" y="637.5" width="11.5" height="11" fill="#3a6ec8"/><rect x="701.6" y="638.6" width="4.3" height="4" fill="#b8d4f4"/><rect x="706.6" y="638.6" width="4.3" height="4" fill="#b8d4f4"/><rect x="701.6" y="643.5" width="4.3" height="4" fill="#b8d4f4"/><rect x="706.6" y="643.5" width="4.3" height="4" fill="#b8d4f4"/><path d="M713.5 642.5H717L715.25 645Z" fill="#222"/>
</svg>
<!-- BROWSER -->
<div class="a" style="left:3px;top:117px;width:200px;height:17px;background:#efefef;border:1px solid #dadada"></div>
<div class="t" style="left:19px;top:121.78px;font-size:7.8px;color:#555;transform:scaleX(0.943);transform-origin:0 0;">BROWSER</div>
<svg style="left:6px;top:122px" width="8" height="6"><path d="M0 3L3.5 0.5V5.5Z M3.5 3L7 0.5V5.5Z" fill="#333"/></svg>
<svg style="left:187px;top:121px" width="9" height="9"><circle cx="4.5" cy="4.5" r="4" fill="#222"/><rect x="2.3" y="4" width="4.4" height="1.1" fill="#fff"/></svg>
<svg width="0" height="0" style="position:absolute"><defs>
<symbol id="eye" viewBox="0 0 10 7"><path d="M0 3.5C2 -0.2 8 -0.2 10 3.5C8 7.2 2 7.2 0 3.5Z" fill="#8a8a8a"/><circle cx="5" cy="3.5" r="1.9" fill="#e8e8e8"/><circle cx="5" cy="3.5" r="1.1" fill="#8a8a8a"/></symbol>
<symbol id="eyeh" viewBox="0 0 10 8"><path d="M0.5 4C2.2 0.9 7.8 0.9 9.5 4C7.8 7.1 2.2 7.1 0.5 4Z" fill="none" stroke="#a8a8a8" stroke-width="1"/><circle cx="5" cy="4" r="1.7" fill="none" stroke="#a8a8a8" stroke-width="0.9"/><path d="M2.2 0.3L7.8 7.7" stroke="#a8a8a8" stroke-width="0.9"/></symbol>
<symbol id="folder" viewBox="0 0 11 9"><path d="M0 1.2h4l0.8 1h6.2V9H0z" fill="#8e8e8e"/><rect x="0" y="0.3" width="4" height="1" fill="#8e8e8e"/></symbol>
<symbol id="body" viewBox="0 0 11 11"><rect x="0.7" y="0.7" width="9.6" height="9.6" rx="2" fill="#fff" stroke="#6c6c6c" stroke-width="1"/><rect x="3" y="4" width="5" height="5" fill="#d8d8d8"/></symbol>
<symbol id="skp" viewBox="0 0 12 12"><path d="M1 1.6H9.6M1 1.6V10.2M9.6 1.6V6M1 10.2H5.5" stroke="#666" stroke-width="0.7" stroke-dasharray="1.1 0.7" fill="none"/><rect x="0.2" y="0.8" width="1.7" height="1.7" fill="#3c9ee8"/><rect x="8.8" y="0.8" width="1.7" height="1.7" fill="#3c9ee8"/><rect x="0.2" y="9.4" width="1.7" height="1.7" fill="#3c9ee8"/><path d="M6.3 11.2L6.9 9.6L9.8 6.7L10.9 7.8L8 10.7Z" fill="#f5a623"/><path d="M9.8 6.7L10.9 7.8L11.4 7.3L10.3 6.2Z" fill="#e8695a"/></symbol>
<symbol id="skl" viewBox="0 0 12 12"><path d="M1 1.6H9.6M1 1.6V10.2M9.6 1.6V6M1 10.2H5.5" stroke="#666" stroke-width="0.7" stroke-dasharray="1.1 0.7" fill="none"/><rect x="0.3" y="0.9" width="1.4" height="1.4" fill="#444"/><rect x="8.9" y="0.9" width="1.4" height="1.4" fill="#444"/><rect x="0.3" y="9.5" width="1.4" height="1.4" fill="#444"/><path d="M7.3 8.3V7.4a1.3 1.3 0 0 1 2.6 0V8.3" fill="none" stroke="#d84a2e" stroke-width="0.9"/><rect x="6.5" y="8.2" width="4.2" height="3.6" rx="0.5" fill="#d84a2e"/><rect x="7.6" y="9.6" width="2" height="0.7" fill="#f4b0a0"/></symbol>
<symbol id="tri_c" viewBox="0 0 8 10"><path d="M1.2 1.2L6.8 5L1.2 8.8Z" fill="#fff" stroke="#444" stroke-width="1.3" stroke-linejoin="round"/></symbol>
<symbol id="tri_o" viewBox="0 0 8 9"><path d="M0.6 8.4L7.4 1.2V8.4Z" fill="#666" stroke="#333" stroke-width="1.1" stroke-linejoin="round"/><path d="M3.2 7.6L6.5 4.1V7.6Z" fill="#bbb"/></symbol>
<symbol id="gear" viewBox="0 0 10 10"><g fill="#8e8e8e"><circle cx="5" cy="5" r="3.2"/><rect x="4" y="0" width="2" height="10"/><rect x="0" y="4" width="10" height="2"/><rect x="4" y="0" width="2" height="10" transform="rotate(45 5 5)"/><rect x="4" y="0" width="2" height="10" transform="rotate(-45 5 5)"/></g><circle cx="5" cy="5" r="1.5" fill="#f0f0f0"/></symbol>
</defs></svg>
<div class="a" style="left:27px;top:137px;width:99px;height:14px;background:#f0f0f0"></div>
<svg style="left:14px;top:140px" width="8" height="9"><use href="#tri_o" width="8" height="9"/></svg>
<svg style="left:29px;top:141px" width="10" height="7"><use href="#eye" width="10" height="7"/></svg>
<div class="a" style="left:43px;top:139px;width:66px;height:10px;background:#8c8c8c"></div>
<svg style="left:45px;top:139px" width="10.5" height="10.5"><use href="#body" width="10.5" height="10.5"/></svg>
<div class="t" style="left:65px;top:140.2px;font-size:8.4px;font-weight:bold;color:#f4f4f4;transform:scaleX(0.89);transform-origin:0 0">(Unsaved)</div>
<svg style="left:110px;top:139px" width="11" height="11"><circle cx="5.5" cy="5.5" r="4.3" fill="#fff" stroke="#333" stroke-width="1"/><circle cx="5.5" cy="5.5" r="2" fill="#222"/></svg>
<div class="a" style="left:39px;top:153px;width:89px;height:13.5px;background:#f0f0f0"></div>
<svg style="left:26.5px;top:155px" width="7" height="10"><use href="#tri_c" width="7" height="10"/></svg>
<svg style="left:41px;top:155.5px" width="9" height="9"><use href="#gear" width="9" height="9"/></svg>
<div class="t rt" style="left:58px;top:156.4px;transform:scaleX(0.845);transform-origin:0 0">Document Settings</div>
<div class="a" style="left:39px;top:169px;width:73px;height:13.5px;background:#f0f0f0"></div>
<svg style="left:26.5px;top:171px" width="7" height="10"><use href="#tri_c" width="7" height="10"/></svg>
<svg style="left:41px;top:171.5px" width="11" height="9"><use href="#folder" width="11" height="9"/></svg>
<div class="t rt" style="left:60.5px;top:172.4px;transform:scaleX(0.845);transform-origin:0 0">Named Views</div>
<div class="a" style="left:39px;top:185px;width:66px;height:13.5px;background:#f0f0f0"></div>
<svg style="left:26.5px;top:187px" width="7" height="10"><use href="#tri_c" width="7" height="10"/></svg>
<svg style="left:41px;top:188px" width="10" height="8"><use href="#eyeh" width="10" height="8"/></svg>
<svg style="left:57px;top:187.5px" width="11" height="9"><use href="#folder" width="11" height="9"/></svg>
<div class="t rt" style="left:77.5px;top:188.4px;transform:scaleX(0.845);transform-origin:0 0">Origin</div>
<div class="a" style="left:39px;top:201px;width:68px;height:13.5px;background:#f0f0f0"></div>
<svg style="left:26px;top:203.5px" width="8" height="9"><use href="#tri_o" width="8" height="9"/></svg>
<svg style="left:41px;top:204.5px" width="10" height="7"><use href="#eye" width="10" height="7"/></svg>
<svg style="left:57px;top:203.5px" width="11" height="9"><use href="#folder" width="11" height="9"/></svg>
<div class="t rt" style="left:77.5px;top:204.4px;transform:scaleX(0.845);transform-origin:0 0">Bodies</div>
<div class="a" style="left:51px;top:217px;width:66px;height:13.5px;background:#f0f0f0"></div>
<svg style="left:53px;top:220.5px" width="10" height="7"><use href="#eye" width="10" height="7"/></svg>
<svg style="left:69px;top:218.5px" width="11" height="11"><use href="#body" width="11" height="11"/></svg>
<div class="t rt" style="left:89.5px;top:220.4px;transform:scaleX(0.845);transform-origin:0 0">Body1</div>
<div class="a" style="left:51px;top:233px;width:66px;height:13.5px;background:#f0f0f0"></div>
<svg style="left:53px;top:236.5px" width="10" height="7"><use href="#eye" width="10" height="7"/></svg>
<svg style="left:69px;top:234.5px" width="11" height="11"><use href="#body" width="11" height="11"/></svg>
<div class="t rt" style="left:89.5px;top:236.4px;transform:scaleX(0.845);transform-origin:0 0">Body2</div>
<div class="a" style="left:39px;top:249px;width:76px;height:13.5px;background:#f0f0f0"></div>
<svg style="left:26px;top:251.5px" width="8" height="9"><use href="#tri_o" width="8" height="9"/></svg>
<svg style="left:41px;top:252.5px" width="10" height="7"><use href="#eye" width="10" height="7"/></svg>
<svg style="left:57px;top:251.5px" width="11" height="9"><use href="#folder" width="11" height="9"/></svg>
<div class="t rt" style="left:77.5px;top:252.4px;transform:scaleX(0.845);transform-origin:0 0">Sketches</div>
<div class="a" style="left:51px;top:265px;width:71px;height:13.5px;background:#f0f0f0"></div>
<svg style="left:53px;top:268px" width="10" height="8"><use href="#eyeh" width="10" height="8"/></svg>
<svg style="left:69px;top:266px" width="12" height="12"><use href="#skp" width="12" height="12"/></svg>
<div class="t rt" style="left:89.5px;top:268.4px;transform:scaleX(0.845);transform-origin:0 0">Sketch1</div>
<div class="a" style="left:51px;top:281px;width:71px;height:13.5px;background:#f0f0f0"></div>
<svg style="left:53px;top:284.5px" width="10" height="7"><use href="#eye" width="10" height="7"/></svg>
<svg style="left:69px;top:282px" width="12" height="12"><use href="#skl" width="12" height="12"/></svg>
<div class="t rt" style="left:89.5px;top:284.4px;transform:scaleX(0.845);transform-origin:0 0">Sketch2</div>
<div class="a" style="left:51px;top:297px;width:74px;height:13.5px;background:#f0f0f0"></div>
<svg style="left:53px;top:300.5px" width="10" height="7"><use href="#eye" width="10" height="7"/></svg>
<svg style="left:69px;top:298px" width="12" height="12"><use href="#skl" width="12" height="12"/></svg>
<div class="t rt" style="left:89.5px;top:300.4px;transform:scaleX(0.845);transform-origin:0 0">Sketch3</div>
<div class="a" style="left:51px;top:313px;width:71px;height:13.5px;background:#f0f0f0"></div>
<svg style="left:53px;top:316.5px" width="10" height="7"><use href="#eye" width="10" height="7"/></svg>
<svg style="left:69px;top:314px" width="12" height="12"><use href="#skl" width="12" height="12"/></svg>
<div class="t rt" style="left:89.5px;top:316.4px;transform:scaleX(0.845);transform-origin:0 0">Sketch4</div>
<div class="a" style="left:51px;top:329px;width:74px;height:13.5px;background:#f0f0f0"></div>
<svg style="left:53px;top:332.5px" width="10" height="7"><use href="#eye" width="10" height="7"/></svg>
<svg style="left:69px;top:330px" width="12" height="12"><use href="#skp" width="12" height="12"/></svg>
<div class="t rt" style="left:89.5px;top:332.4px;transform:scaleX(0.845);transform-origin:0 0">Sketch5</div>
<div class="a" style="left:51px;top:345px;width:71px;height:13.5px;background:#f0f0f0"></div>
<svg style="left:53px;top:348.5px" width="10" height="7"><use href="#eye" width="10" height="7"/></svg>
<svg style="left:69px;top:346px" width="12" height="12"><use href="#skp" width="12" height="12"/></svg>
<div class="t rt" style="left:89.5px;top:348.4px;transform:scaleX(0.845);transform-origin:0 0">Sketch6</div>
<!-- BOTTOM -->
<div id="bottom" class="a"></div>
<div class="a" style="left:0;top:655px;width:90px;height:1px;background:#dcdcdc"></div>
<svg style="left:0;top:655px" width="1280" height="28" viewBox="0 655 1280 28">
<defs>
<symbol id="tsk" viewBox="0 0 12 11"><rect x="1" y="1" width="9" height="9" fill="#fff"/><path d="M1 1H10V5M1 1V10H5.5" fill="none" stroke="#8a8a8a" stroke-width="0.6" stroke-dasharray="1 0.6"/><rect x="0.3" y="0.3" width="1.5" height="1.5" fill="#3c9ee8"/><rect x="9.2" y="0.3" width="1.5" height="1.5" fill="#3c9ee8"/><rect x="0.3" y="9.2" width="1.5" height="1.5" fill="#3c9ee8"/><path d="M3 3.5H6.5M3 3.5V7" stroke="#666" stroke-width="0.5"/><path d="M6 10.8L6.8 8.8L10 5.6L11.2 6.8L8 10Z" fill="#f5a623"/><path d="M10 5.6L11.2 6.8L11.8 6L10.8 5Z" fill="#e25a4a"/></symbol>
<symbol id="tex" viewBox="0 0 12 11"><path d="M1 2.5L2.5 0.8H10L8.5 2.5Z" fill="#8ccbf5"/><path d="M8.5 2.5L10 0.8V8.5L8.5 10.2Z" fill="#4a90d0"/><rect x="1" y="2.5" width="7.5" height="7.7" fill="#6aafe3"/><path d="M10.5 1V9" stroke="#888" stroke-width="0.7"/><path d="M1 10.2H8.5" stroke="#aaa" stroke-width="0.8"/></symbol>
<symbol id="tsp" viewBox="0 0 12 11"><path d="M1 2.3L2.5 0.8H10.5L9 2.3Z" fill="#8ccbf5"/><rect x="1" y="2.3" width="8" height="3.5" fill="#6aafe3"/><path d="M9 2.3L10.5 0.8V4.5L9 5.8Z" fill="#4a90d0"/><path d="M0.5 6.2H10.8" stroke="#5aa6e0" stroke-width="0.9"/><path d="M1.5 7V9.5L2.5 10.5H9L10.3 9.2V7Z" fill="#ddd" stroke="#888" stroke-width="0.5"/></symbol>
<symbol id="tth" viewBox="0 0 12 11"><rect x="2" y="0.5" width="8" height="10" fill="#f4f4f4" stroke="#999" stroke-width="0.6"/><path d="M0.8 3.5L11 1.5M0.8 6.2L11 4.2M0.8 8.9L11 6.9M1 2.2L11 3.7M1 4.9L11 6.4M1 7.6L11 9.1" stroke="#4a9ee0" stroke-width="0.9"/></symbol>
</defs>
<g fill="#5a5a5a">
 <rect x="7" y="667.5" width="1.6" height="8"/><path d="M15 667.5V675.6L9 671.5Z"/>
 <path d="M23.5 671.5L30 667.5V675.6Z"/><rect x="30.5" y="669.8" width="1.5" height="3.5"/>
 <path d="M40.5 667.5L48.5 671.5L40.5 675.6Z"/>
 <rect x="56.5" y="669.8" width="1.5" height="3.5"/><path d="M58.5 667.5L65 671.5L58.5 675.6Z"/>
 <path d="M73.8 667.5L80 671.5L73.8 675.6Z"/><rect x="80" y="667.5" width="1.6" height="8"/>
</g>
<use href="#tsk" x="96.9" y="665" width="12" height="11"/>
<use href="#tex" x="113.2" y="665" width="12" height="11"/>
<use href="#tsk" x="129.2" y="665" width="12" height="11"/>
<use href="#tsk" x="145" y="665" width="12" height="11"/>
<use href="#tsk" x="161" y="665" width="12" height="11"/>
<use href="#tsp" x="177.6" y="665" width="12" height="11"/>
<use href="#tsk" x="193" y="665" width="12" height="11"/>
<use href="#tex" x="209.4" y="665" width="12" height="11"/>
<use href="#tex" x="225.7" y="665" width="12" height="11"/>
<use href="#tth" x="241.5" y="665" width="12" height="11"/>
<use href="#tth" x="257.5" y="665" width="12" height="11"/>
<use href="#tth" x="273.5" y="665" width="12" height="11"/>
<use href="#tsk" x="289.3" y="665" width="12" height="11"/>
<path d="M103 681.5H295" stroke="#aaa" stroke-width="0.9"/><path d="M102.4 678.5V681" stroke="#aaa" stroke-width="0.8"/><path d="M118.7 678.5V681" stroke="#aaa" stroke-width="0.8"/><path d="M134.7 678.5V681" stroke="#aaa" stroke-width="0.8"/><path d="M150.5 678.5V681" stroke="#aaa" stroke-width="0.8"/><path d="M166.5 678.5V681" stroke="#aaa" stroke-width="0.8"/><path d="M183.1 678.5V681" stroke="#aaa" stroke-width="0.8"/><path d="M198.5 678.5V681" stroke="#aaa" stroke-width="0.8"/><path d="M214.9 678.5V681" stroke="#aaa" stroke-width="0.8"/><path d="M231.2 678.5V681" stroke="#aaa" stroke-width="0.8"/><path d="M247.0 678.5V681" stroke="#aaa" stroke-width="0.8"/><path d="M263.0 678.5V681" stroke="#aaa" stroke-width="0.8"/><path d="M279.0 678.5V681" stroke="#aaa" stroke-width="0.8"/><path d="M294.8 678.5V681" stroke="#aaa" stroke-width="0.8"/>
<path d="M297 661.5H308.3L304.5 666.5H300.8Z" fill="#5a5a5a"/><rect x="301.7" y="664" width="2" height="19" fill="#5a5a5a"/>
<g transform="translate(1266.2 671.4)" fill="#555"><circle r="3.6"/><rect x="-0.9" y="-5.2" width="1.8" height="10.4"/><rect x="-5.2" y="-0.9" width="10.4" height="1.8"/><rect x="-0.9" y="-5.2" width="1.8" height="10.4" transform="rotate(45)"/><rect x="-0.9" y="-5.2" width="1.8" height="10.4" transform="rotate(-45)"/><circle r="1.6" fill="#f1f1f1"/></g>
</svg>
<div class="a" style="left:3px;top:635px;width:200px;height:17px;background:#efefef;border:1px solid #dadada"></div>
<div class="t" style="left:19.5px;top:639.88px;font-size:7.8px;color:#555;transform:scaleX(0.934);transform-origin:0 0;">COMMENTS</div>
<svg style="left:187px;top:639px" width="9" height="9"><circle cx="4.5" cy="4.5" r="4" fill="#222"/><rect x="2.3" y="4" width="4.4" height="1.1" fill="#fff"/><rect x="4" y="2.3" width="1.1" height="4.4" fill="#fff"/></svg>
</body></html>
